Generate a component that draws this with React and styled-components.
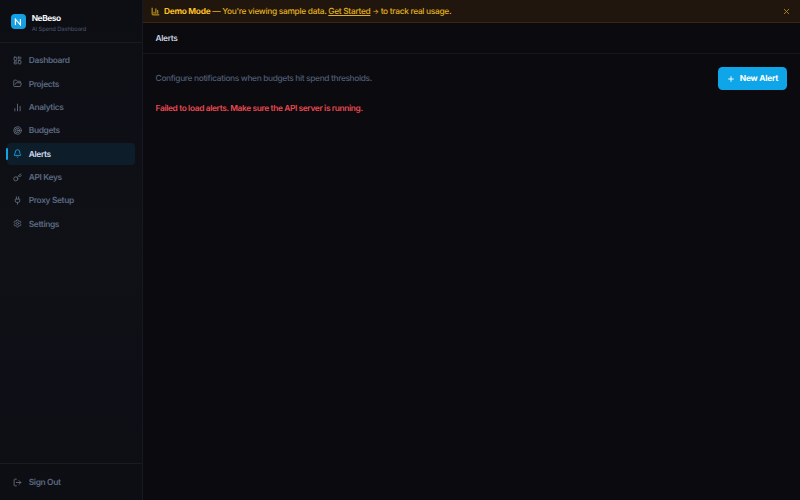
import React from 'react'
import styled, { createGlobalStyle } from 'styled-components'
import {
  LayoutDashboard,
  FolderOpen,
  ChartNoAxesColumn,
  ChartColumn,
  Target,
  Bell,
  Key,
  Plug,
  Settings,
  LogOut,
  Plus,
  X,
} from 'lucide-react'

const GlobalStyle = createGlobalStyle`
  * {
    box-sizing: border-box;
  }
  body {
    margin: 0;
    background: #0a0a0f;
    font-family: Inter, "Liberation Sans", sans-serif;
    font-size: 8.4px;
    letter-spacing: -0.34px;
    text-rendering: geometricPrecision;
  }
`

const Layout = styled.div`
  display: flex;
  height: 100vh;
  overflow: hidden;
`

const Sidebar = styled.aside`
  display: flex;
  flex-direction: column;
  width: 142.6px;
  flex-shrink: 0;
  background: linear-gradient(180deg, #0d0d14 0%, #0f1117 50%, #0d0d14 100%);
  border-right: 1px solid #171922;
`

const Brand = styled.div`
  display: flex;
  align-items: center;
  gap: 6.2px;
  height: 43px;
  padding: 0 11px;
  border-bottom: 1px solid #191b24;
`

const Logo = styled.div`
  display: flex;
  align-items: center;
  justify-content: center;
  width: 14.5px;
  height: 14.5px;
  margin-top: 1px;
  border-radius: 4px;
  background: linear-gradient(135deg, #0ea5e9, #1b9be0);
`

const BrandName = styled.div`
  margin-top: 5px;
  color: #f1f5f9;
  font-size: 8.4px;
  font-weight: 700;
  line-height: 11px;
  letter-spacing: -0.45px;
`

const BrandNote = styled.div`
  color: #4d5a6e;
  font-size: 5.8px;
  line-height: 9px;
  letter-spacing: -0.1px;
`

const Nav = styled.nav`
  display: flex;
  flex-direction: column;
  flex: 1;
  gap: 1.33px;
  padding: 6.5px 7px;
`

const NavItem = styled.a`
  position: relative;
  display: flex;
  align-items: center;
  gap: 6.6px;
  height: 22px;
  padding: 0 6.2px;
  border-radius: 4px;
  font-size: 8.4px;
  font-weight: 600;
  letter-spacing: -0.36px;
  color: ${(p) => (p.$active ? '#d3dcf0' : '#5b6980')};
  background: ${(p) => (p.$active ? '#0d1d29' : 'transparent')};

  svg {
    color: ${(p) => (p.$active ? '#0ea5e9' : '#626b79')};
  }
`

const NavLabel = styled.span`
  padding-top: 1.6px;
`

const Marker = styled.span`
  position: absolute;
  left: -1px;
  top: 5px;
  width: 1.5px;
  height: 12px;
  border-radius: 1px;
  background: #0ea5e9;
`

const SidebarFooter = styled.div`
  height: 37px;
  padding: 7px 7px 0;
  border-top: 1px solid #191b24;
`

const Main = styled.main`
  flex: 1;
  min-width: 0;
`

const Banner = styled.div`
  display: flex;
  align-items: center;
  height: 23px;
  padding: 0 9px 0 8px;
  color: #e0b01e;
  background: #20160e;
  border-bottom: 1px solid #3a2810;
  font-weight: 500;
  letter-spacing: -0.31px;
`

const BannerText = styled.span`
  flex: 1;
  margin-left: 4.5px;
  padding-top: 1.4px;
  white-space: nowrap;

  strong {
    font-weight: 700;
    color: #fbbf24;
  }
  a {
    text-decoration: underline;
  }
`

const Arrow = styled.span`
  font-size: 7px;
`

const CloseIcon = styled(X)`
  color: #b98a1c;
`

const TopBar = styled.header`
  display: flex;
  align-items: center;
  height: 31px;
  padding: 1.4px 13px 0;
  border-bottom: 1px solid #15161e;
`

const Title = styled.h1`
  margin: 0;
  color: #cbd5e1;
  font-size: 8.3px;
  font-weight: 600;
`

const Content = styled.section`
  padding: 13px;
`

const Toolbar = styled.div`
  display: flex;
  align-items: center;
  justify-content: space-between;
  height: 23px;
`

const Hint = styled.p`
  margin: 0;
  padding-top: 1px;
  color: #4f5d73;
  font-size: 8.4px;
  font-weight: 500;
  letter-spacing: -0.36px;
`

const NewButton = styled.button`
  display: flex;
  align-items: center;
  justify-content: center;
  gap: 5px;
  width: 69px;
  height: 23px;
  padding: 0;
  border: 0;
  border-radius: 4.5px;
  background: #0ea5e9;
  color: #fff;
  font-family: inherit;
  font-size: 8.4px;
  font-weight: 650;
  letter-spacing: -0.25px;
  text-rendering: inherit;
`

const ErrorText = styled.p`
  margin: 13px 0 0;
  color: #e9494f;
  font-size: 8.4px;
  font-weight: 600;
  line-height: 12px;
  letter-spacing: -0.38px;
`

const items = [
  { label: 'Dashboard', icon: LayoutDashboard },
  { label: 'Projects', icon: FolderOpen },
  { label: 'Analytics', icon: ChartNoAxesColumn },
  { label: 'Budgets', icon: Target },
  { label: 'Alerts', icon: Bell, active: true },
  { label: 'API Keys', icon: Key },
  { label: 'Proxy Setup', icon: Plug },
  { label: 'Settings', icon: Settings },
]

const App = () => {
  return (
    <>
      <GlobalStyle />
      <Layout>
        <Sidebar>
          <Brand>
            <Logo>
              <svg width="8" height="8" viewBox="0 0 8 8" fill="none" stroke="#fff" strokeWidth="1.2">
                <path d="M1.4 7V1.2L6.4 6.8V1" />
              </svg>
            </Logo>
            <div>
              <BrandName>NeBeso</BrandName>
              <BrandNote>AI Spend Dashboard</BrandNote>
            </div>
          </Brand>
          <Nav>
            {items.map(({ label, icon: Icon, active }) => (
              <NavItem key={label} $active={active}>
                {active && <Marker />}
                <Icon size={9} strokeWidth={2.4} />
                <NavLabel>{label}</NavLabel>
              </NavItem>
            ))}
          </Nav>
          <SidebarFooter>
            <NavItem>
              <LogOut size={9} strokeWidth={2.4} />
              <NavLabel>Sign Out</NavLabel>
            </NavItem>
          </SidebarFooter>
        </Sidebar>
        <Main>
          <Banner>
            <ChartColumn size={9} strokeWidth={2.5} />
            <BannerText>
              <strong>Demo Mode</strong> — You're viewing sample data. <a>Get Started</a> <Arrow>→</Arrow> to track real usage.
            </BannerText>
            <CloseIcon size={9} strokeWidth={2.4} />
          </Banner>
          <TopBar>
            <Title>Alerts</Title>
          </TopBar>
          <Content>
            <Toolbar>
              <Hint>Configure notifications when budgets hit spend thresholds.</Hint>
              <NewButton>
                <Plus size={8} strokeWidth={2.8} />
                New Alert
              </NewButton>
            </Toolbar>
            <ErrorText>Failed to load alerts. Make sure the API server is running.</ErrorText>
          </Content>
        </Main>
      </Layout>
    </>
  )
}

export default App
